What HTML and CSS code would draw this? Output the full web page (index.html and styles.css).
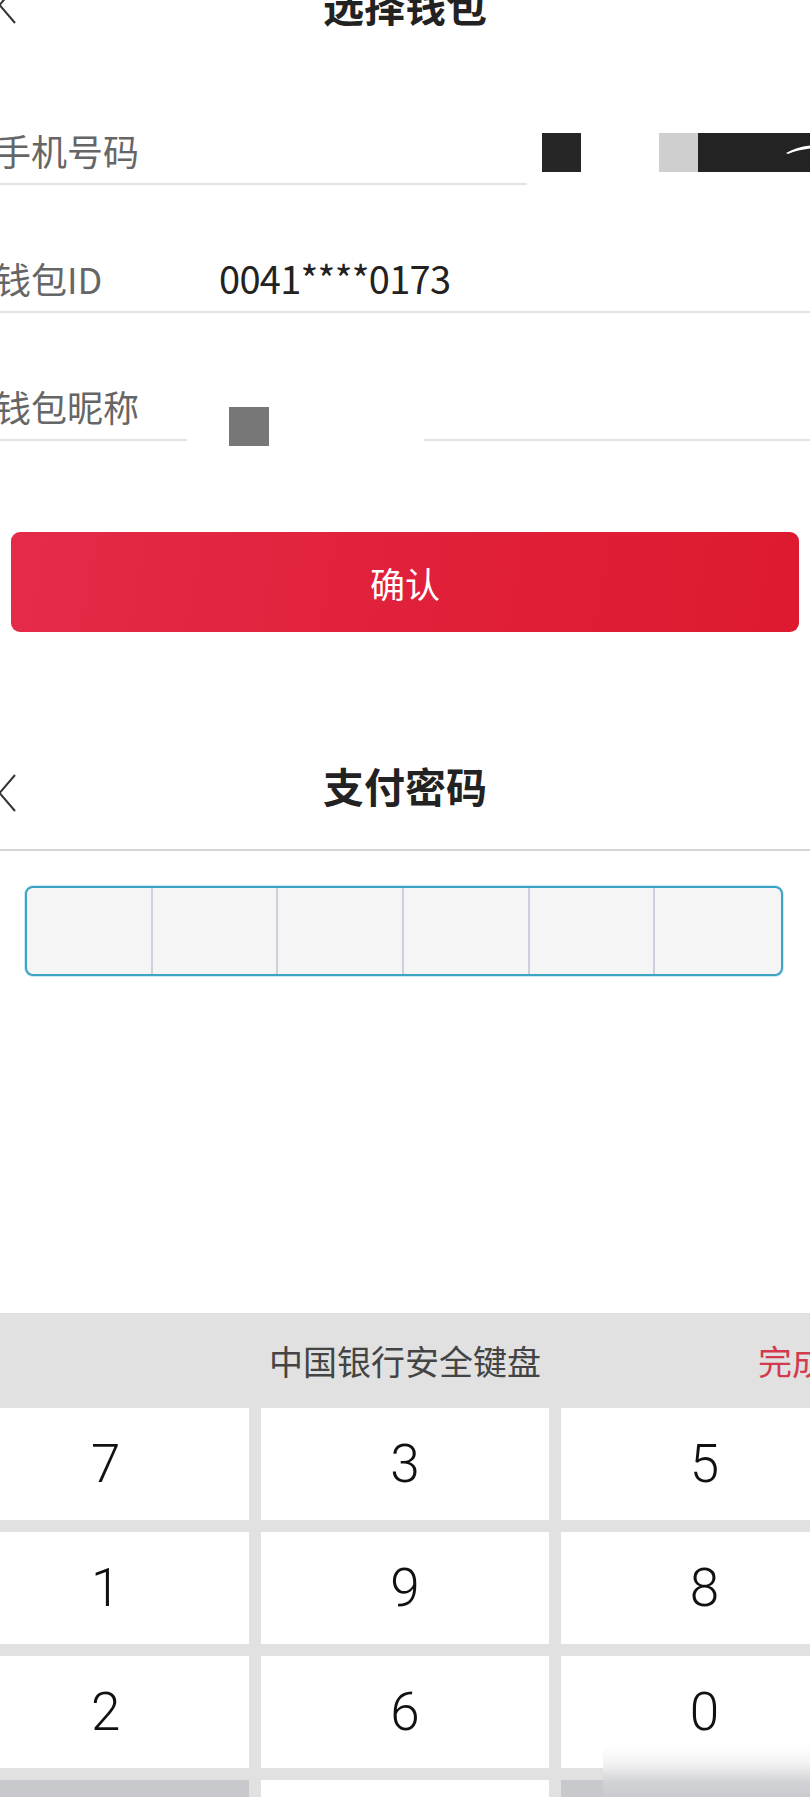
FILE: index.html
```html
<!DOCTYPE html>
<html lang="zh-CN">
<head>
    <meta charset="UTF-8">
    <meta name="viewport" content="width=device-width, initial-scale=1.0">
    <title>选择钱包</title>
    <link rel="stylesheet" href="styles.css">
</head>
<body>

    <div class="screen">

        <!-- Wallet selection page -->
        <header class="nav nav-top">
            <svg class="back" viewBox="0 0 18 38" width="18" height="38"><path d="M17 1 L1.5 19 L17 37" fill="none" stroke="#333" stroke-width="2"/></svg>
            <h1>选择钱包</h1>
            <span></span>
        </header>

        <div class="form">
            <div class="row">
                <span class="label">手机号码</span>
                <span class="value"></span>
                <div class="mask mask-phone">
                    <span class="blk blk-a"></span>
                    <span class="blk blk-b"></span>
                    <span class="blk blk-c">
                        <svg viewBox="0 0 30 14" width="30" height="14"><path d="M0 10 Q12 3 30 2 L30 5 Q14 6 2 11 Z" fill="#fff"/></svg>
                    </span>
                </div>
            </div>
            <div class="row">
                <span class="label">钱包ID</span>
                <span class="value">0041****0173</span>
            </div>
            <div class="row">
                <span class="label">钱包昵称</span>
                <span class="value"></span>
                <div class="mask mask-name">
                    <span class="blk blk-d"></span>
                </div>
            </div>
        </div>

        <button class="btn-confirm" type="button">确认</button>

        <!-- Pay password page -->
        <header class="nav nav-pay">
            <svg class="back" viewBox="0 0 18 38" width="18" height="38"><path d="M17 1 L1.5 19 L17 37" fill="none" stroke="#333" stroke-width="2"/></svg>
            <h1>支付密码</h1>
            <span></span>
        </header>
        <div class="divider"></div>

        <div class="pin">
            <span class="cell"></span>
            <span class="cell"></span>
            <span class="cell"></span>
            <span class="cell"></span>
            <span class="cell"></span>
            <span class="cell"></span>
        </div>

        <!-- Bank secure keyboard -->
        <div class="keyboard">
            <div class="kb-bar">
                <span></span>
                <span class="kb-title">中国银行安全键盘</span>
                <span class="kb-done">完成</span>
            </div>
            <div class="keys">
                <span class="key">7</span>
                <span class="key">3</span>
                <span class="key">5</span>
                <span class="key">1</span>
                <span class="key">9</span>
                <span class="key">8</span>
                <span class="key">2</span>
                <span class="key">6</span>
                <span class="key">0</span>
                <span class="key key-fn"></span>
                <span class="key">4</span>
                <span class="key key-fn"></span>
                <div class="fade"></div>
            </div>
        </div>

    </div>

</body>
</html>
```

FILE: styles.css
```css
/* General Styles */
html, body {
    margin: 0;
    padding: 0;
    height: 1797px;
    overflow: hidden;
    background-color: #fff;
}

body {
    font-family: "Noto Sans CJK SC", "Noto Sans", sans-serif;
    color: #222;
}

/* the capture is cropped a little on both sides */
.screen {
    width: 886px;
    margin-left: -38px;
}

/* Navigation bars */
.nav {
    display: grid;
    grid-template-columns: 1fr auto 1fr;
    align-items: center;
    height: 60px;
    padding-left: 36px;
    padding-right: 36px;
}

.nav h1 {
    margin: 0;
    font-size: 41px;
    line-height: 60px;
    font-weight: bold;
    color: #222;
}

.back {
    display: block;
}

.nav-top {
    margin-top: -23px;
}

.nav-top h1 {
    margin-top: -6px;
}

.nav-top .back {
    margin-top: -4px;
}

.nav-pay {
    margin-top: 128px;
}

.nav-pay h1 {
    margin-top: -10px;
}

.nav-pay .back {
    margin-top: 6px;
}

.divider {
    margin-top: 29px;
    height: 2px;
    background-color: #d5d5d5;
}

/* Form rows */
.form {
    margin-top: 20px;
}

.row {
    position: relative;
    display: flex;
    align-items: flex-end;
    height: 118px;
    padding-left: 33px;
    padding-bottom: 8px;
    border-bottom: 2px solid #e3e3e3;
}

.label {
    width: 224px;
    font-size: 36px;
    line-height: 50px;
    color: #666;
}

.value {
    font-size: 38px;
    line-height: 50px;
    color: #222;
    letter-spacing: -0.7px;
}

/* redacted blocks lying over the rows */
.mask {
    position: absolute;
    background-color: #fff;
}

.mask-phone {
    left: 565px;
    right: 0;
    top: 65px;
    bottom: -4px;
}

.mask-name {
    left: 225px;
    width: 237px;
    top: 80px;
    bottom: -8px;
}

.blk {
    position: absolute;
}

.blk-a {
    left: 15px;
    top: 11px;
    width: 39px;
    height: 39px;
    background-color: #262626;
}

.blk-b {
    left: 132px;
    top: 11px;
    width: 39px;
    height: 39px;
    background-color: #cfcfcf;
}

.blk-c {
    left: 171px;
    right: 0;
    top: 11px;
    height: 39px;
    background-color: #232323;
}

.blk-c svg {
    position: absolute;
    left: 88px;
    top: 10px;
}

.blk-d {
    left: 42px;
    top: 14px;
    width: 40px;
    height: 39px;
    background-color: #777;
}

/* Confirm button */
.btn-confirm {
    display: block;
    width: 788px;
    height: 100px;
    margin: 91px 0 0 49px;
    border: none;
    border-radius: 9px;
    background: linear-gradient(100deg, #e42b48 0%, #e01f38 60%, #dd1a2f 100%);
    color: #fff;
    font-family: "Noto Sans CJK SC", sans-serif;
    font-size: 35px;
    cursor: pointer;
}

/* Pay password boxes */
.pin {
    display: grid;
    grid-template-columns: repeat(6, 1fr);
    height: 86px;
    margin: 35px 65px 0 63px;
    border: 2px solid #3ea2c3;
    border-radius: 8px;
    background-color: #f5f5f5;
    box-shadow: 0 0 0 1px #c7ecf6;
    overflow: hidden;
}

.cell {
    border-right: 2px solid #cdd0dc;
}

.cell:last-child {
    border-right: none;
}

/* Keyboard */
.keyboard {
    margin-top: 337px;
    background-color: #e1e1e1;
}

.kb-bar {
    display: grid;
    grid-template-columns: 1fr auto 1fr;
    align-items: center;
    height: 95px;
    padding: 0 22px;
}

.kb-title {
    font-size: 34px;
    color: #444;
}

.kb-done {
    justify-self: end;
    font-size: 34px;
    color: #d23a4e;
}

.keys {
    position: relative;
    display: grid;
    grid-template-columns: repeat(3, 1fr);
    grid-auto-rows: 112px;
    gap: 12px;
    padding-bottom: 12px;
}

.key {
    display: flex;
    align-items: center;
    justify-content: center;
    background-color: #fff;
    font-family: "Roboto", "Noto Sans", sans-serif;
    font-weight: 300;
    font-size: 53px;
    color: #111;
}

.key-fn {
    background-color: #c8c9cc;
}

.fade {
    position: absolute;
    left: 641px;
    right: 0;
    top: 338px;
    height: 60px;
    background: linear-gradient(180deg, #fff 0%, #f2f2f3 30%, #d2d3d6 60%, #c6c7ca 100%);
}
```
